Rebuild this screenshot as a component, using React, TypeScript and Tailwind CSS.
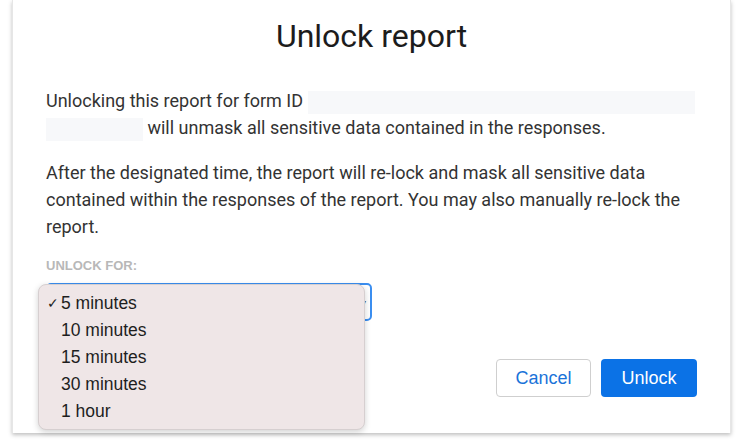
import React from "react";

export default function App() {
  const items = ["5 minutes", "10 minutes", "15 minutes", "30 minutes", "1 hour"];
  return (
    <div className="w-[743px] h-[440px] bg-white overflow-hidden">
      <div className="relative ml-[12px] w-[719px] h-[433px] bg-white border-x border-[#e6e6e6] shadow-[0_2px_4px_rgba(0,0,0,0.25)]">
        <div className="pt-[16px] text-center text-[32px] leading-[40px] text-[#1c1c1c] font-['Roboto',sans-serif]">
          Unlock report
        </div>
        <div className="px-[33px] pt-[31px] font-['Roboto',sans-serif] text-[18px] leading-[27px] text-[#333]">
          <p>
            Unlocking this report for form ID{" "}
            <span className="inline-block align-middle w-[387px] h-[23px] bg-[#f7f8fa]"></span>
            <br />
            <span className="inline-block align-middle w-[97px] h-[23px] bg-[#f7f8fa]"></span> will unmask all sensitive data contained in the responses.
          </p>
          <p className="mt-[18px]">
            After the designated time, the report will re-lock and mask all sensitive data contained within the responses of the report. You may also manually re-lock the report.
          </p>
          <div className="mt-[18px] text-[13px] leading-[16px] font-bold text-[#b8b8b8] font-['Liberation_Sans',sans-serif]">
            UNLOCK FOR:
          </div>
          <div className="mt-[9px] w-[326px] h-[38px] rounded-[5px] border-2 border-[#3b8ef0] bg-white flex items-center justify-end pr-[4px]">
            <span className="text-[10px] text-[#555]">▾</span>
          </div>
          <div className="flex justify-end gap-[10px] mt-[38px] font-['Liberation_Sans',sans-serif] text-[18px]">
            <button className="w-[95px] h-[38px] rounded-[4px] border border-[#cfcfcf] bg-white text-[#1a73d9]">
              Cancel
            </button>
            <button className="w-[96px] h-[38px] rounded-[4px] bg-[#0b72e6] text-white">
              Unlock
            </button>
          </div>
        </div>
        <div className="absolute left-[25px] top-[284px] w-[327px] h-[146px] rounded-[8px] bg-[#efe6e7] border border-[#d6cfd0] shadow-[0_2px_6px_rgba(0,0,0,0.18)] pt-[5px] font-['Liberation_Sans',sans-serif] text-[17.5px] text-[#1e1e1e]">
          {items.map((it, i) => (
            <div key={it} className="relative h-[27px] leading-[27px] pl-[22px]">
              {i === 0 && (
                <span className="absolute left-[8px] top-0 text-[14px]">✓</span>
              )}
              {it}
            </div>
          ))}
        </div>
      </div>
    </div>
  );
}
